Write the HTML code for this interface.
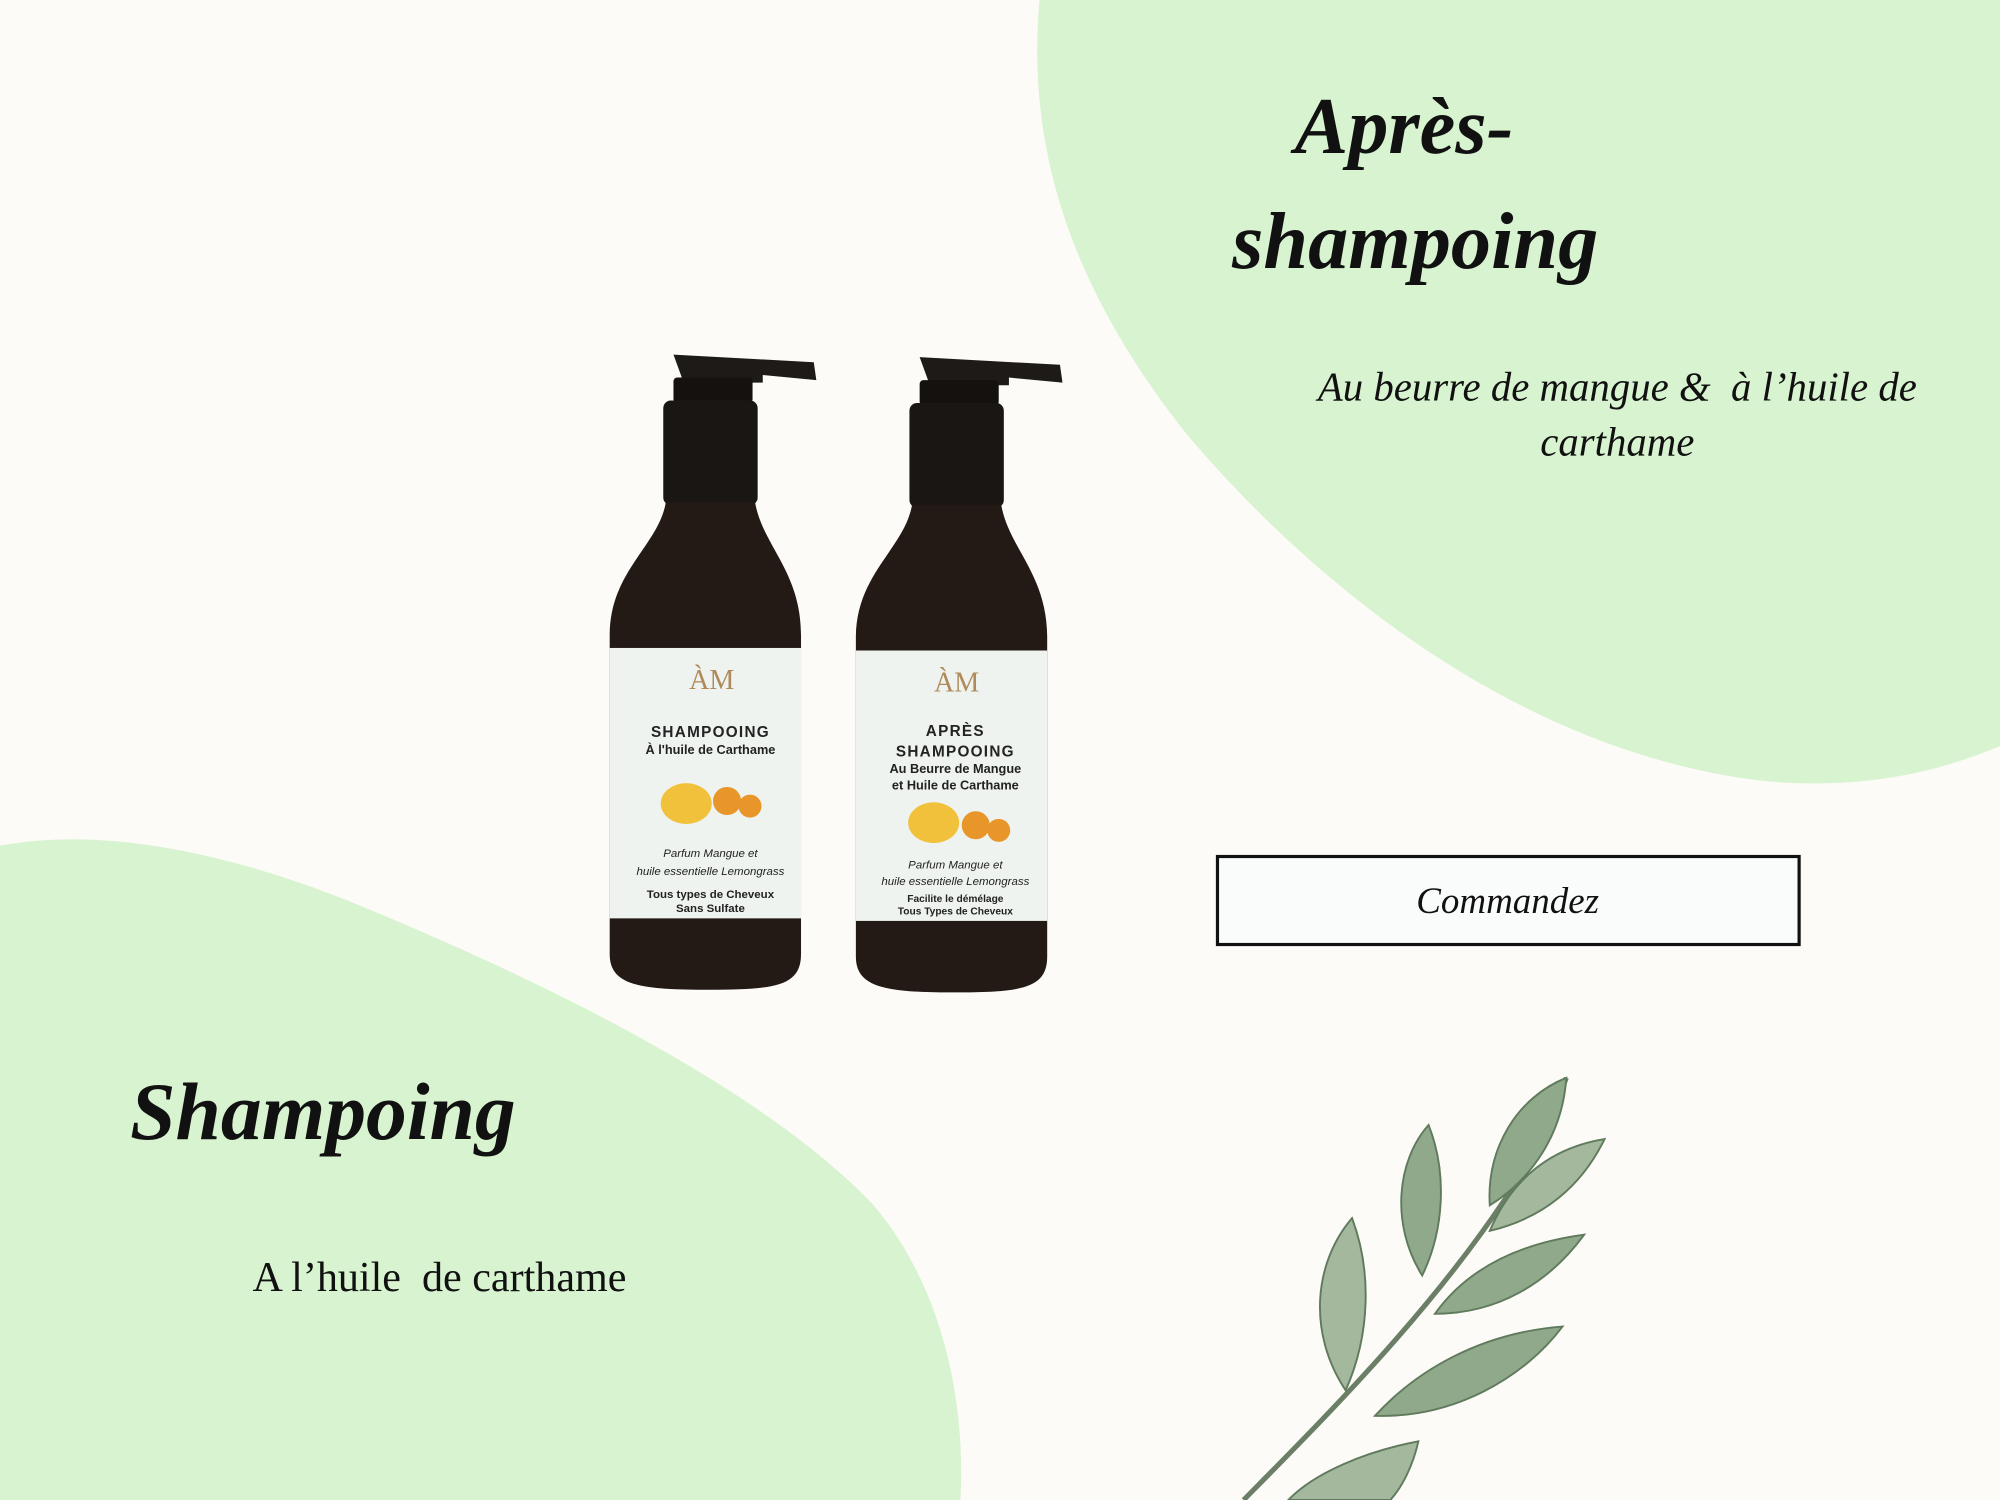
<!DOCTYPE html>
<html><head><meta charset="utf-8">
<style>
html,body{margin:0;padding:0;background:#fdfbf8;}
svg{display:block;width:2000px;height:1500px;}
</style></head>
<body>
<svg viewBox="0 0 1568 1176" preserveAspectRatio="none" xmlns="http://www.w3.org/2000/svg">
<rect width="1568" height="1176" fill="#fdfbf8"/>
<path d="M815 0 C805 110 835 220 930 340 C1040 470 1200 590 1380 612 C1460 620 1520 605 1568 585 L1568 0 Z" fill="#d8f3cf"/>
<path d="M0 663 C70 650 160 662 270 705 C430 770 600 855 685 945 C740 1010 757 1100 753 1176 L0 1176 Z" fill="#d8f3cf"/>

<g font-family="'Liberation Serif',serif" font-style="italic" font-weight="bold" fill="#111">
<text x="1015" y="120" font-size="63">Après-</text>
<text x="966" y="210" font-size="63">shampoing</text>
<text x="102" y="893" font-size="64">Shampoing</text>
</g>
<g font-family="'Liberation Serif',serif" fill="#111">
<text x="1268" y="314" font-size="32" font-style="italic" text-anchor="middle" xml:space="preserve">Au beurre de mangue &amp;  à l’huile de</text>
<text x="1268" y="357" font-size="32" font-style="italic" text-anchor="middle">carthame</text>
<text x="198" y="1012" font-size="33" xml:space="preserve">A l’huile  de carthame</text>
</g>
<rect x="954.5" y="671.5" width="456" height="69" fill="#fafcfb" stroke="#111" stroke-width="2.5"/>
<text x="1182" y="716" font-size="29" font-style="italic" font-family="'Liberation Serif',serif" text-anchor="middle" fill="#111">Commandez</text>

<defs>
<g id="bottle">
 <path d="M0 0 L110 6 L112 20 L70 16 L70 22 L8 22 Z" fill="#1e1a18"/>
 <rect x="0" y="18" width="62" height="20" rx="3" fill="#15110f"/>
 <rect x="-8" y="36" width="74" height="82" rx="6" fill="#1a1614"/>
 <path d="M-6 116 L64 116 C70 150 100 170 100 220 L100 470 C100 495 80 498 28 498 C-25 498 -50 495 -50 470 L-50 220 C-50 170 -12 150 -6 116 Z" fill="#231a16"/>
 <rect x="-50" y="230" width="150" height="212" fill="#eef3ef"/>
</g>
</defs>
<use href="#bottle" x="528" y="278"/>
<use href="#bottle" x="721" y="280"/>

<g font-family="'Liberation Sans',sans-serif" text-anchor="middle" fill="#222">
 <text x="558" y="540" font-size="22" fill="#b08a5a" font-family="'Liberation Serif',serif">ÀM</text>
 <text x="557" y="578" font-size="12" font-weight="bold" letter-spacing="1">SHAMPOOING</text>
 <text x="557" y="591" font-size="10" font-weight="bold">À l'huile de Carthame</text>
 <ellipse cx="538" cy="630" rx="20" ry="16" fill="#f2c13c"/>
 <circle cx="570" cy="628" r="11" fill="#e8952a"/><circle cx="588" cy="632" r="9" fill="#e8952a"/>
 <text x="557" y="672" font-size="9" font-style="italic">Parfum Mangue et</text>
 <text x="557" y="686" font-size="9" font-style="italic">huile essentielle Lemongrass</text>
 <text x="557" y="704" font-size="9" font-weight="bold">Tous types de Cheveux</text>
 <text x="557" y="715" font-size="9" font-weight="bold">Sans Sulfate</text>

 <text x="750" y="542" font-size="22" fill="#b08a5a" font-family="'Liberation Serif',serif">ÀM</text>
 <text x="749" y="577" font-size="12" font-weight="bold" letter-spacing="1">APRÈS</text>
 <text x="749" y="593" font-size="12" font-weight="bold" letter-spacing="1">SHAMPOOING</text>
 <text x="749" y="606" font-size="10" font-weight="bold">Au Beurre de Mangue</text>
 <text x="749" y="619" font-size="10" font-weight="bold">et Huile de Carthame</text>
 <ellipse cx="732" cy="645" rx="20" ry="16" fill="#f2c13c"/>
 <circle cx="765" cy="647" r="11" fill="#e8952a"/><circle cx="783" cy="651" r="9" fill="#e8952a"/>
 <text x="749" y="681" font-size="9" font-style="italic">Parfum Mangue et</text>
 <text x="749" y="694" font-size="9" font-style="italic">huile essentielle Lemongrass</text>
 <text x="749" y="707" font-size="8" font-weight="bold">Facilite le démélage</text>
 <text x="749" y="717" font-size="8" font-weight="bold">Tous Types de Cheveux</text>
</g>

<g fill="#8fa98a" stroke="#5f7a5c" stroke-width="1.5">
 <path d="M975 1176 C1040 1110 1120 1030 1180 940 C1200 905 1215 880 1228 845" fill="none" stroke="#6b7f66" stroke-width="4"/>
 <path d="M1228 845 C1190 860 1165 900 1168 945 C1200 925 1225 890 1228 845 Z"/>
 <path d="M1258 893 C1215 900 1185 925 1168 965 C1210 955 1240 930 1258 893 Z" fill="#a3b89c"/>
 <path d="M1120 882 C1095 910 1090 960 1115 1000 C1132 965 1135 920 1120 882 Z"/>
 <path d="M1242 968 C1190 975 1150 995 1125 1030 C1175 1030 1215 1005 1242 968 Z"/>
 <path d="M1060 955 C1030 990 1025 1045 1055 1090 C1075 1045 1075 995 1060 955 Z" fill="#a3b89c"/>
 <path d="M1225 1040 C1160 1045 1110 1075 1078 1110 C1140 1112 1195 1080 1225 1040 Z"/>
 <path d="M1112 1130 C1070 1138 1030 1155 1010 1176 L1090 1176 C1100 1165 1108 1148 1112 1130 Z" fill="#a3b89c"/>
</g>
</svg>
</body></html>
